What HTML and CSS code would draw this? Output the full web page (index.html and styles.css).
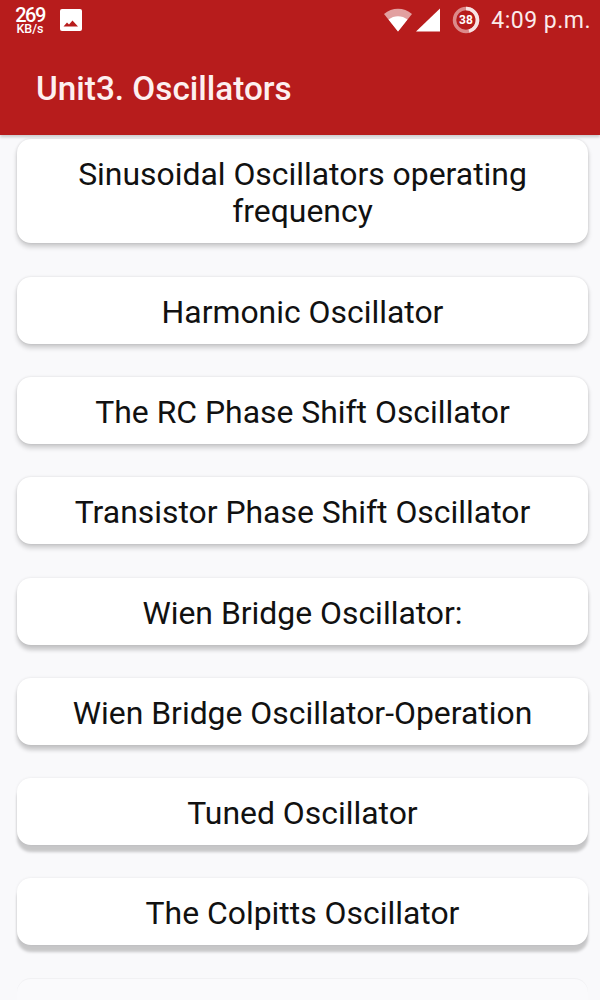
FILE: index.html
```html
<!DOCTYPE html>
<html lang="en">
<head>
<meta charset="utf-8">
<title>Unit3. Oscillators</title>
<link rel="stylesheet" href="styles.css">
</head>
<body>
<div class="app">
  <header class="appbar">
    <div class="status">
      <div class="speed"><span class="speed-num">269</span><span class="speed-unit">KB/s</span></div>
      <svg class="pic" width="22" height="22" viewBox="0 0 22 22"><rect width="22" height="22" rx="2" fill="#fff"/><path d="M3.500 17.500 L7 13.500 L9 15.500 L12.500 11.500 L18 17.500 Z" fill="#b71c1c"/></svg>
      <div class="spacer"></div>
      <svg class="wifi" width="28" height="24" viewBox="0 0 28 24"><path d="M0 6 C8 -1 20 -1 28 6 L14 23.500 Z" fill="#e2a0a0"/><path d="M4.500 11.500 C10 7 18 7 23.500 11.500 L14 23.500 Z" fill="#fff"/></svg>
      <svg class="signal" width="25" height="24" viewBox="0 0 25 24"><path d="M0 23.500 L24 0.500 V23.500 Z" fill="#fff"/></svg>
      <svg class="battery" width="28" height="28" viewBox="0 0 28 28"><circle cx="14" cy="14" r="11.500" fill="none" stroke="#dc8a8a" stroke-width="3.500"/><path d="M14 2.500 A11.500 11.500 0 0 1 17 25.100" fill="none" stroke="#f8e4e4" stroke-width="3.500"/><text x="14" y="18" text-anchor="middle" class="battery-text">38</text></svg>
      <span class="clock">4:09 p.m.</span>
    </div>
    <h1 class="title">Unit3. Oscillators</h1>
  </header>
  <main class="list">
    <div class="card">Sinusoidal Oscillators operating frequency</div>
    <div class="card">Harmonic Oscillator</div>
    <div class="card">The RC Phase Shift Oscillator</div>
    <div class="card">Transistor Phase Shift Oscillator</div>
    <div class="card">Wien Bridge Oscillator:</div>
    <div class="card">Wien Bridge Oscillator-Operation</div>
    <div class="card">Tuned Oscillator</div>
    <div class="card">The Colpitts Oscillator</div>
    <div class="card card-faded"></div>
  </main>
</div>
</body>
</html>
```

FILE: styles.css
```css
html, body {
  margin: 0;
  padding: 0;
}
body {
  width: 600px;
  height: 1000px;
  overflow: hidden;
  background: #f9f9fb;
  font-family: Roboto, "Liberation Sans", sans-serif;
}
.app {
  display: flex;
  flex-direction: column;
  height: 1000px;
  overflow: hidden;
}
.appbar {
  position: relative;
  z-index: 2;
  height: 135px;
  flex: none;
  background: #b71c1c;
  color: #fff;
  box-shadow: 0 2px 3px rgba(0, 0, 0, 0.2);
}
.status {
  display: flex;
  align-items: center;
  height: 40px;
  padding: 0 9px 0 16px;
}
.speed {
  display: flex;
  flex-direction: column;
  align-items: center;
  width: 28px;
  padding-top: 2px;
  font-weight: 500;
}
.speed-num {
  font-size: 20px;
  line-height: 16px;
  letter-spacing: -1.500px;
}
.speed-unit {
  font-size: 12.500px;
  line-height: 12px;
}
.pic {
  margin-left: 16px;
}
.spacer {
  flex: 1;
}
.wifi {
  margin-right: 4px;
}
.signal {
  margin-right: 11px;
}
.battery {
  margin-right: 11px;
}
.battery-text {
  font: 700 12px Roboto, sans-serif;
  fill: #fff;
}
.clock {
  font-size: 23px;
  letter-spacing: 0.500px;
  color: #fbeaea;
}
.title {
  margin: 27px 0 0 36px;
  font-size: 33.300px;
  font-weight: 500;
  line-height: 44px;
  color: #fdf0f0;
}
.list {
  display: flex;
  flex-direction: column;
  gap: 33.300px;
  padding: 4.400px 12px 0 17px;
}
.card {
  flex: none;
  display: flex;
  align-items: center;
  justify-content: center;
  min-height: 67px;
  padding: 17px 10px 13px;
  box-sizing: border-box;
  text-align: center;
  background: #fff;
  border-radius: 14px;
  font-size: 31.900px;
  line-height: 37px;
  color: #111;
  box-shadow: 0 4px 5px rgba(0, 0, 0, 0.18), 0 0 3px rgba(0, 0, 0, 0.12);
}
.card:nth-child(n+5) {
  box-shadow: 0 5px 4px rgba(0, 0, 0, 0.2), 0 0 3px rgba(0, 0, 0, 0.1);
}
.card:nth-child(n+7) {
  box-shadow: 0 7px 3px rgba(0, 0, 0, 0.2), 0 0 3px rgba(0, 0, 0, 0.08);
}
.card.card-faded {
  background: #fafafc;
  box-shadow: 0 -1px 0 #f1f1f3;
}
```
